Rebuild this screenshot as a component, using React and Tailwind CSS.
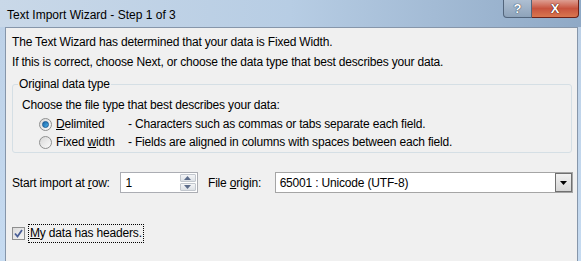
import React from 'react';

const FONT = { fontFamily: '"Liberation Sans", Arial, sans-serif' };

function Radio({ checked }) {
    return (
        <span className="w-[13px] h-[13px] rounded-full border border-[#8e8f8f] bg-gradient-to-br from-[#d8d8d8] to-[#fbfbfb] flex items-center justify-center">
            {checked && (
                <span className="w-[7px] h-[7px] rounded-full bg-gradient-to-br from-[#1a64a8] to-[#4bb1e8] border border-[#195a94]" />
            )}
        </span>
    );
}

function Row({ checked, label, underlineIndex, desc }) {
    return (
        <div className="h-[18px] flex items-center">
            <div className="w-[34px] flex justify-end pr-[4px]">
                <Radio checked={checked} />
            </div>
            <div className="w-[72px]">
                {label.slice(0, underlineIndex)}
                <span className="underline">{label[underlineIndex]}</span>
                {label.slice(underlineIndex + 1)}
            </div>
            <div>{desc}</div>
        </div>
    );
}

export default function App() {
    return (
        <div className="w-[581px] h-[261px] overflow-hidden bg-gradient-to-b from-[#bcd0e6] to-[#c6dbf1] text-[12px] tracking-[-0.18px] text-black" style={FONT}>
            {/* title bar */}
            <div className="h-[27px] flex items-start bg-gradient-to-r from-[#c9d8e8] via-[#b7cde4] to-[#8fa9c6]">
                <div className="pl-[7px] pt-[6px] text-[12px] tracking-normal text-black">Text Import Wizard - Step 1 of 3</div>
                <div className="ml-auto mr-[2px] flex h-[18px]">
                    <div className="w-[29px] h-[18px] rounded-bl-[4px] border border-[#52657c] border-t-0 bg-gradient-to-b from-[#aebfd2] to-[#8ea3ba] flex items-center justify-center text-white font-bold text-[13px] [text-shadow:0_0_1px_#2b3d52,0_0_1px_#2b3d52]">?</div>
                    <div className="w-[47px] h-[18px] rounded-br-[4px] border border-[#6b2017] border-t-0 border-l-0 bg-gradient-to-b from-[#dd9e92] via-[#c7533e] to-[#d9764f] flex items-center justify-center text-white font-bold text-[13px] [text-shadow:0_0_1px_#3c0b05,0_0_1px_#3c0b05]">X</div>
                </div>
            </div>

            {/* client area */}
            <div className="ml-[5px] mr-[3px] h-[234px] border-l border-t border-r border-[#8696aa] bg-[#f0f0f0] pl-[6px] pr-[4px]">
                <div className="mt-[4px] h-[20px] leading-[20px]">The Text Wizard has determined that your data is Fixed Width.</div>
                <div className="h-[20px] leading-[20px]">If this is correct, choose Next, or choose the data type that best describes your data.</div>

                <div className="relative mt-[12px] w-[560px] h-[69px] border border-[#d5dfe5] rounded-[3px] pl-[9px] pt-[10px]">
                    <div className="absolute -top-[8px] left-[5px] px-[1px] bg-[#f0f0f0] leading-[15px]">Original data type</div>
                    <div className="h-[20px] leading-[20px]">Choose the file type that best describes your data:</div>
                    <Row checked label="Delimited" underlineIndex={0} desc="- Characters such as commas or tabs separate each field." />
                    <Row label="Fixed width" underlineIndex={6} desc="- Fields are aligned in columns with spaces between each field." />
                </div>

                <div className="mt-[19px] h-[21px] flex items-center">
                    <div className="w-[109px]">Start import at <span className="underline">r</span>ow:</div>
                    <div className="w-[78px] h-[21px] border border-[#abadb3] bg-white flex items-center">
                        <span className="pl-[4px] flex-1">1</span>
                        <div className="w-[16px] h-[17px] mr-[1px] flex flex-col gap-[1px]">
                            <div className="h-[8px] border border-[#c2c7ce] rounded-[1px] bg-gradient-to-b from-[#f4f5f7] to-[#dde1e6] flex items-center justify-center">
                                <svg width="7" height="4" viewBox="0 0 7 4"><path d="M0 4 L3.5 0 L7 4 Z" fill="#5c6c8a" /></svg>
                            </div>
                            <div className="h-[8px] border border-[#c2c7ce] rounded-[1px] bg-gradient-to-b from-[#f4f5f7] to-[#dde1e6] flex items-center justify-center">
                                <svg width="7" height="4" viewBox="0 0 7 4"><path d="M0 0 L3.5 4 L7 0 Z" fill="#5c6c8a" /></svg>
                            </div>
                        </div>
                    </div>
                    <div className="ml-[10px] w-[67px]">File <span className="underline">o</span>rigin:</div>
                    <div className="w-[300px] h-[21px] border border-[#a5a5a5] bg-white flex items-center">
                        <span className="pl-[4px] flex-1">65001 : Unicode (UTF-8)</span>
                        <div className="w-[17px] h-[19px] border border-[#707070] bg-gradient-to-b from-[#f2f2f2] to-[#d6d6d6] flex items-center justify-center">
                            <svg width="7" height="4" viewBox="0 0 7 4"><path d="M0 0 L3.5 4 L7 0 Z" fill="#000" /></svg>
                        </div>
                    </div>
                </div>

                <div className="mt-[30px] h-[20px] flex items-center">
                    <div className="w-[13px] h-[13px] border border-[#8e8f8f] bg-gradient-to-br from-[#dcdcdc] to-[#f4f4f4] flex items-center justify-center">
                        <svg width="9" height="9" viewBox="0 0 9 9"><path d="M1 4.5 L3.5 7.5 L8 1" fill="none" stroke="#4a5f97" strokeWidth="1.8" /></svg>
                    </div>
                    <div className="ml-[3px] px-[1px] border border-dotted border-black h-[19px] leading-[17px]">
                        <span className="underline">M</span>y data has headers.
                    </div>
                </div>
            </div>
        </div>
    );
}
